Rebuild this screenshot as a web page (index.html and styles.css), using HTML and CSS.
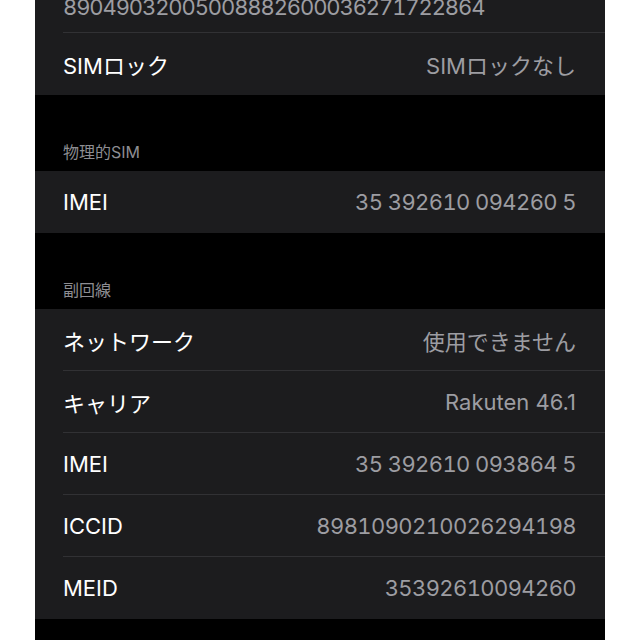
FILE: index.html
```html
<!DOCTYPE html>
<html lang="ja">
<head>
  <meta charset="UTF-8">
  <meta name="viewport" content="width=device-width, initial-scale=1">
  <title>情報</title>
  <link rel="stylesheet" href="styles.css">
</head>
<body>
  <div class="screen">
    <!-- 上のグループ（途中から） -->
    <div class="group">
      <div class="row">
        <div class="row-inner row-sub">
          <span class="value num num-long">89049032005008882600036271722864</span>
        </div>
      </div>
      <div class="row">
        <div class="row-inner">
          <span class="label">SIMロック</span>
          <span class="value">SIMロックなし</span>
        </div>
      </div>
    </div>

    <div class="section-header">物理的SIM</div>
    <div class="group">
      <div class="row">
        <div class="row-inner">
          <span class="label">IMEI</span>
          <span class="value num">35 392610 094260 5</span>
        </div>
      </div>
    </div>

    <div class="section-header">副回線</div>
    <div class="group">
      <div class="row">
        <div class="row-inner">
          <span class="label">ネットワーク</span>
          <span class="value">使用できません</span>
        </div>
      </div>
      <div class="row">
        <div class="row-inner">
          <span class="label">キャリア</span>
          <span class="value">Rakuten 46.1</span>
        </div>
      </div>
      <div class="row">
        <div class="row-inner">
          <span class="label">IMEI</span>
          <span class="value num">35 392610 093864 5</span>
        </div>
      </div>
      <div class="row">
        <div class="row-inner">
          <span class="label">ICCID</span>
          <span class="value num">8981090210026294198</span>
        </div>
      </div>
      <div class="row">
        <div class="row-inner">
          <span class="label">MEID</span>
          <span class="value num">35392610094260</span>
        </div>
      </div>
    </div>
  </div>
</body>
</html>
```

FILE: styles.css
```css
body {
  margin: 0;
  padding: 0;
  background: #fff;
  font-family: Inter, "Noto Sans CJK JP", sans-serif;
  overflow: hidden;
}
.screen {
  width: 570px;
  margin: -29px 0 0 35px;
  min-height: 700px;
  background: #000;
}
.group {
  background: #1c1c1e;
}
.row {
  padding-left: 28px;
}
.row-inner {
  height: 62px;
  box-sizing: border-box;
  display: flex;
  align-items: center;
  justify-content: space-between;
  padding-right: 29px;
  border-bottom: 1px solid #313134;
}
.row:last-child .row-inner {
  border-bottom: none;
}
/* value shown under its label (long ICCID) */
.row-sub {
  align-items: flex-end;
  padding-bottom: 12px;
}
.label {
  color: #fff;
  font-size: 22px;
}
.value {
  color: #9d9da2;
  font-size: 22px;
  margin-left: auto;
}
.num {
  font-variant-numeric: tabular-nums;
  letter-spacing: -0.6px;
}
.num-long {
  margin-left: 0;
  letter-spacing: -1.1px;
}
.section-header {
  height: 76px;
  box-sizing: border-box;
  display: flex;
  align-items: flex-end;
  padding: 0 0 8px 28px;
  color: #8d8d92;
  font-size: 16px;
  line-height: 22px;
}
```
